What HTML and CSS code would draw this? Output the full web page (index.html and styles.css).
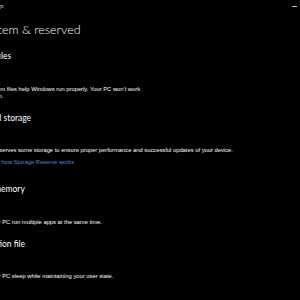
FILE: index.html
```html
<!DOCTYPE html>
<html>
<head>
    <title>Settings</title>
    <link rel="stylesheet" href="styles.css">
</head>
<body>

    <div class="titlebar">
        <span class="app-name">Settings</span>
        <span class="minimize"></span>
    </div>

    <div class="content">
        <h1 class="page-title">System &amp; reserved</h1>

        <div class="section">
            <h2>System files</h2>
            <p class="desc">These system files help Windows run properly. Your PC won't work<br>without them.</p>
        </div>

        <div class="section">
            <h2>Reserved storage</h2>
            <p class="desc">Windows reserves some storage to ensure proper performance and successful updates of your device.</p>
            <a class="link" href="#">Learn about how Storage Reserve works</a>
        </div>

        <div class="section">
            <h2>Virtual memory</h2>
            <p class="desc">It helps your PC run multiple apps at the same time.</p>
        </div>

        <div class="section">
            <h2>Hibernation file</h2>
            <p class="desc">It helps your PC sleep while maintaining your user state.</p>
        </div>
    </div>

</body>
</html>
```

FILE: styles.css
```css
body {
    font-family: Lato, "Open Sans", sans-serif;
    background: #000;
    color: #fff;
    margin: 0;
    padding: 0;
    width: 300px;
    height: 300px;
    overflow: hidden;
}

.titlebar {
    height: 12px;
    display: flex;
    justify-content: space-between;
    align-items: center;
    font-size: 5.5px;
    color: #ddd;
}

    .titlebar .app-name {
        margin-left: -16px;
    }

    .titlebar .minimize {
        width: 5px;
        height: 1px;
        background: #bbb;
        margin-right: 3px;
    }

.content {
    margin-left: -32px;
    white-space: nowrap;
}

.page-title {
    font-size: 12.5px;
    font-weight: 300;
    line-height: 16px;
    margin: 10px 0 0 12px;
}

.section {
    padding-top: 12px;
}

h2 {
    font-size: 8.5px;
    font-weight: 400;
    line-height: 12px;
    margin: 0 0 0 -1px;
}

.desc,
.link {
    font-family: "Liberation Sans", Arial, sans-serif;
    font-size: 5.8px;
    line-height: 7px;
    margin-left: 1px;
}

.desc {
    margin-top: 23.5px;
    margin-bottom: 0;
    margin-right: 0;
}

.link {
    display: block;
    margin-top: 5px;
    margin-bottom: 5px;
    color: #3a96dd;
    text-decoration: none;
}
```
